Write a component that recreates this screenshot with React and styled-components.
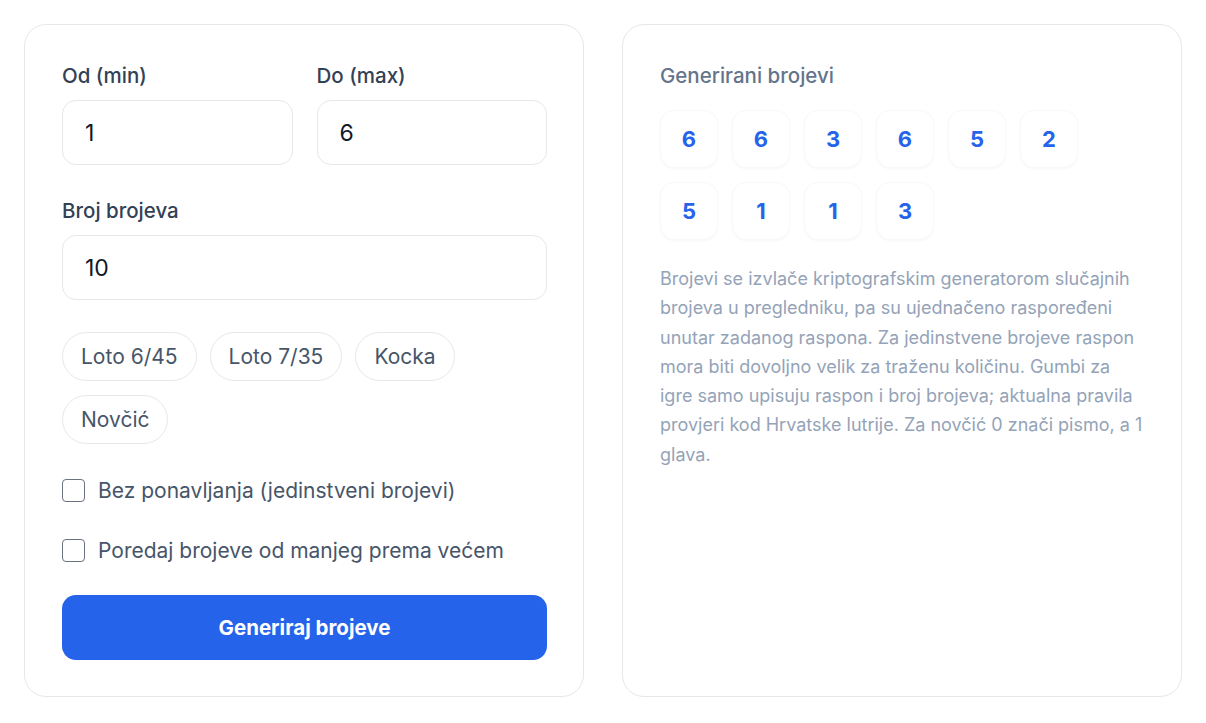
import React from 'react';
import styled, { createGlobalStyle } from 'styled-components';

const GlobalStyle = createGlobalStyle`
  * { box-sizing: border-box; }
  body {
    margin: 0;
    background: #ffffff;
    font-family: Inter, "Noto Sans", sans-serif;
    -webkit-font-smoothing: antialiased;
  }
`;

const numbers = [6, 6, 3, 6, 5, 2, 5, 1, 1, 3];
const presets = ['Loto 6/45', 'Loto 7/35', 'Kocka', 'Novčić'];

const App = () => (
  <Page>
    <GlobalStyle />
    <Card>
      <Form>
        <Row>
          <Field>
            <Label>Od (min)</Label>
            <Input defaultValue="1" />
          </Field>
          <Field>
            <Label>Do (max)</Label>
            <Input defaultValue="6" />
          </Field>
        </Row>
        <Field>
          <Label>Broj brojeva</Label>
          <Input defaultValue="10" />
        </Field>
        <Chips>
          {presets.map((p) => (
            <Chip key={p}>{p}</Chip>
          ))}
        </Chips>
        <Check>
          <Box type="checkbox" />
          Bez ponavljanja (jedinstveni brojevi)
        </Check>
        <Check>
          <Box type="checkbox" />
          Poredaj brojeve od manjeg prema većem
        </Check>
        <Button>Generiraj brojeve</Button>
      </Form>
    </Card>
    <Card>
      <ResultTitle>Generirani brojevi</ResultTitle>
      <Tiles>
        {numbers.map((n, i) => (
          <Tile key={i}>{n}</Tile>
        ))}
      </Tiles>
      <Note>
        Brojevi se izvlače kriptografskim generatorom slučajnih brojeva u pregledniku, pa su
        ujednačeno raspoređeni unutar zadanog raspona. Za jedinstvene brojeve raspon mora biti
        dovoljno velik za traženu količinu. Gumbi za igre samo upisuju raspon i broj brojeva;
        aktualna pravila provjeri kod Hrvatske lutrije. Za novčić 0 znači pismo, a 1 glava.
      </Note>
    </Card>
  </Page>
);

const Page = styled.div`
  display: grid;
  grid-template-columns: 560px 560px;
  gap: 38px;
  padding: 24px;
  align-items: stretch;
`;

const Card = styled.section`
  border: 1px solid #e5e7eb;
  border-radius: 22px;
  padding: 37px 36px 36px 37px;
  background: #fff;
`;

const Form = styled.div`
  display: flex;
  flex-direction: column;
  gap: 32px;
`;

const Row = styled.div`
  display: grid;
  grid-template-columns: 1fr 1fr;
  gap: 24px;
`;

const Field = styled.div`
  display: flex;
  flex-direction: column;
  gap: 10px;
`;

const Label = styled.label`
  font-size: 20.5px;
  line-height: 28px;
  font-weight: 500;
  color: #334155;
`;

const Input = styled.input`
  height: 65px;
  width: 100%;
  border: 1.5px solid #e5e7eb;
  border-radius: 14px;
  padding: 0 22px;
  font-family: Inter, sans-serif;
  font-size: 23px;
  color: #111827;
  background: #fff;
  outline: none;
`;

const Chips = styled.div`
  display: flex;
  flex-wrap: wrap;
  gap: 14px 13px;
`;

const Chip = styled.button`
  height: 49px;
  padding: 0 18px;
  border: 1.5px solid #e5e7eb;
  border-radius: 25px;
  background: #fff;
  font-family: Inter, sans-serif;
  font-size: 21px;
  color: #475569;
`;

const Check = styled.label`
  display: flex;
  align-items: center;
  gap: 13px;
  height: 28px;
  font-size: 21px;
  color: #475569;
`;

const Box = styled.input`
  appearance: none;
  margin: 0;
  width: 23px;
  height: 23px;
  border: 1.5px solid #6b7280;
  border-radius: 4px;
  background: #fff;
`;

const Button = styled.button`
  height: 65px;
  border: none;
  border-radius: 14px;
  background: #2563eb;
  color: #fff;
  font-family: Inter, sans-serif;
  font-size: 20.5px;
  font-weight: 700;
  margin-top: -1px;
`;

const ResultTitle = styled.h2`
  margin: 0;
  font-size: 20.5px;
  line-height: 28px;
  font-weight: 500;
  color: #64748b;
`;

const Tiles = styled.div`
  display: flex;
  flex-wrap: wrap;
  gap: 14px;
  margin-top: 20px;
  max-width: 430px;
`;

const Tile = styled.div`
  width: 58px;
  height: 58px;
  display: flex;
  align-items: center;
  justify-content: center;
  border-radius: 14px;
  background: #fff;
  box-shadow: 0 1px 2px rgba(15, 23, 42, 0.03);
  border: 1px solid #f8f9fb;
  font-size: 22px;
  font-weight: 700;
  color: #2563eb;
`;

const Note = styled.p`
  margin: 24px 0 0;
  font-size: 18px;
  line-height: 29.3px;
  color: #94a3b8;
`;

export default App;
